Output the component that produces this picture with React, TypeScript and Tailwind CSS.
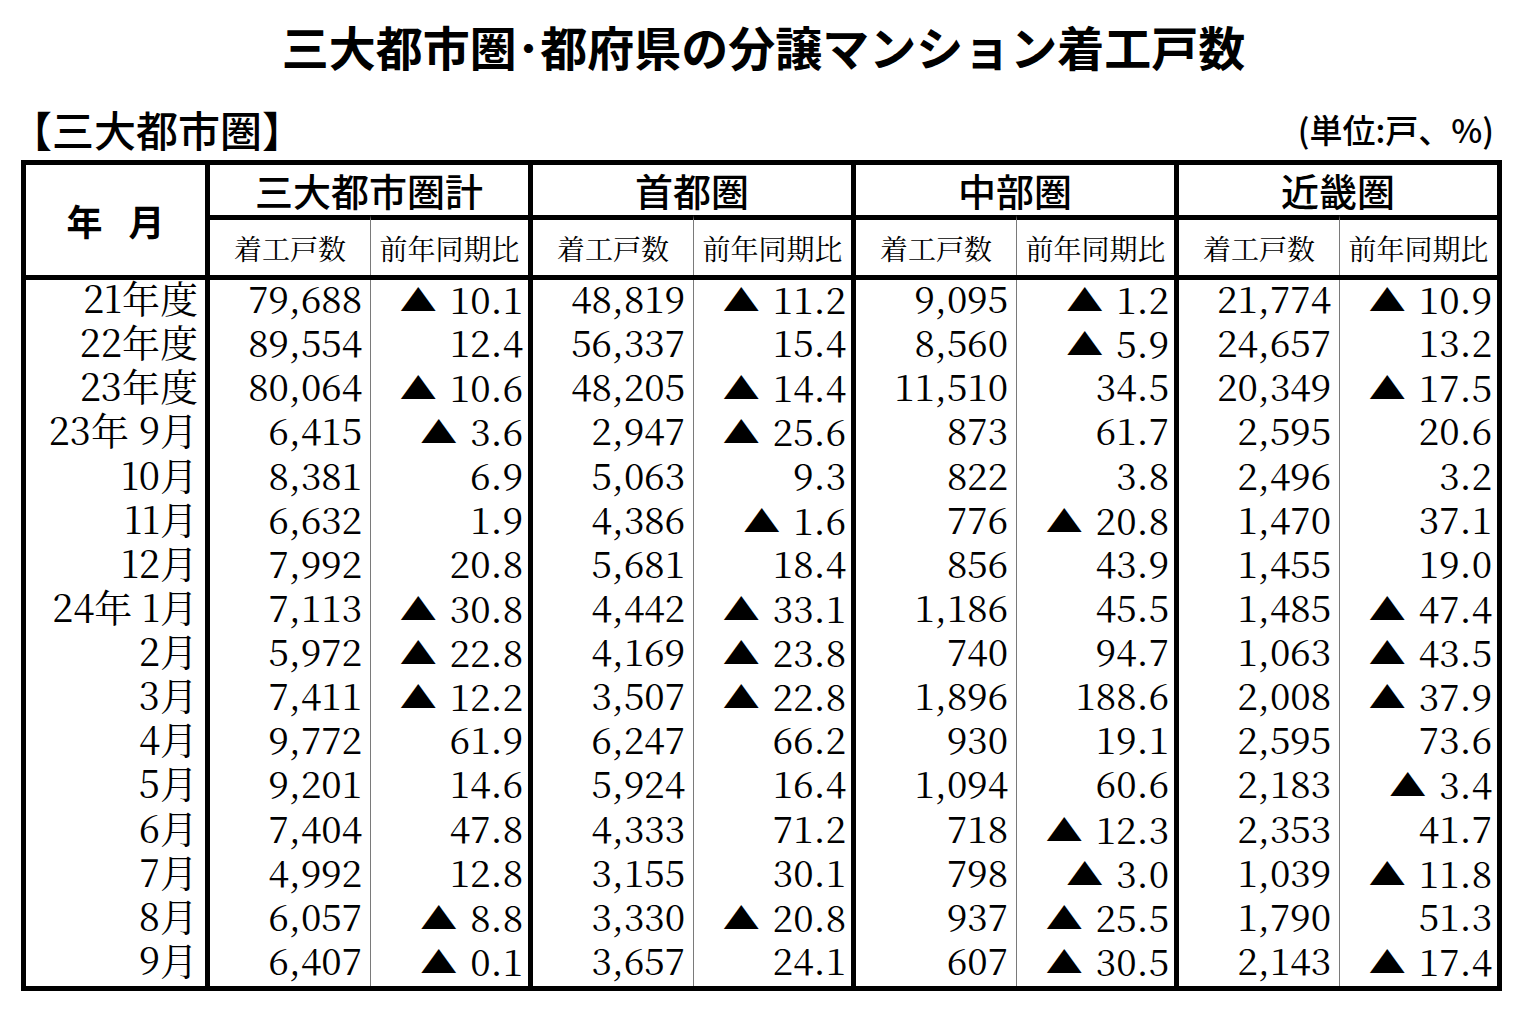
import React from "react";

const rows: string[][] = [
  ["21年度", "79,688", "▲ 10.1", "48,819", "▲ 11.2", "9,095", "▲ 1.2", "21,774", "▲ 10.9"],
  ["22年度", "89,554", "12.4", "56,337", "15.4", "8,560", "▲ 5.9", "24,657", "13.2"],
  ["23年度", "80,064", "▲ 10.6", "48,205", "▲ 14.4", "11,510", "34.5", "20,349", "▲ 17.5"],
  ["23年 9月", "6,415", "▲ 3.6", "2,947", "▲ 25.6", "873", "61.7", "2,595", "20.6"],
  ["10月", "8,381", "6.9", "5,063", "9.3", "822", "3.8", "2,496", "3.2"],
  ["11月", "6,632", "1.9", "4,386", "▲ 1.6", "776", "▲ 20.8", "1,470", "37.1"],
  ["12月", "7,992", "20.8", "5,681", "18.4", "856", "43.9", "1,455", "19.0"],
  ["24年 1月", "7,113", "▲ 30.8", "4,442", "▲ 33.1", "1,186", "45.5", "1,485", "▲ 47.4"],
  ["2月", "5,972", "▲ 22.8", "4,169", "▲ 23.8", "740", "94.7", "1,063", "▲ 43.5"],
  ["3月", "7,411", "▲ 12.2", "3,507", "▲ 22.8", "1,896", "188.6", "2,008", "▲ 37.9"],
  ["4月", "9,772", "61.9", "6,247", "66.2", "930", "19.1", "2,595", "73.6"],
  ["5月", "9,201", "14.6", "5,924", "16.4", "1,094", "60.6", "2,183", "▲ 3.4"],
  ["6月", "7,404", "47.8", "4,333", "71.2", "718", "▲ 12.3", "2,353", "41.7"],
  ["7月", "4,992", "12.8", "3,155", "30.1", "798", "▲ 3.0", "1,039", "▲ 11.8"],
  ["8月", "6,057", "▲ 8.8", "3,330", "▲ 20.8", "937", "▲ 25.5", "1,790", "51.3"],
  ["9月", "6,407", "▲ 0.1", "3,657", "24.1", "607", "▲ 30.5", "2,143", "▲ 17.4"],
];

const groups = ["三大都市圏計", "首都圏", "中部圏", "近畿圏"];

const cols =
  "grid grid-cols-[179px_165px_158px_165px_158px_165px_158px_165px_158px]";

function Value({ v }: { v: string }) {
  if (v.startsWith("▲ ")) {
    return (
      <span className="whitespace-pre">
        <span className="inline-block text-[37px] leading-none mr-[13px] scale-y-[0.8] origin-bottom -translate-y-[4px] font-['Noto_Sans_CJK_JP',sans-serif]">
          ▲
        </span>
        {v.slice(2)}
      </span>
    );
  }
  return <span className="whitespace-pre">{v}</span>;
}

export default function App() {
  return (
    <div className="w-[1527px] h-[1010px] bg-white text-black overflow-hidden font-['Noto_Sans_CJK_JP',sans-serif]">
      <div className="pt-[22px] text-center text-[47px] leading-none font-bold">
        三大都市圏･都府県の分譲マンション着工戸数
      </div>
      <div className="mt-[39px] ml-[10px] mr-[33px] flex items-center justify-between">
        <div className="text-[42px] leading-none font-medium">【三大都市圏】</div>
        <div className="text-[33px] leading-none font-medium">(単位:戸、%)</div>
      </div>
      <div className="mt-[10px] ml-[21px] w-[1481px] border-[5px] border-black">
        <div className={cols}>
          <div className="row-span-2 flex items-center justify-center gap-[26px] text-[36px] leading-none font-bold">
            <span>年</span>
            <span>月</span>
          </div>
          {groups.map((g) => (
            <div
              key={g}
              className="col-span-2 h-[50px] border-l-[5px] border-black flex items-center justify-center text-[38px] leading-none font-medium"
            >
              {g}
            </div>
          ))}
          {groups.map((g) => (
            <React.Fragment key={g + "s"}>
              <div className="h-[60px] border-t-[5px] border-l-[5px] border-black flex items-center justify-center text-[28px] leading-none font-['Noto_Serif_CJK_JP',serif]">
                着工戸数
              </div>
              <div className="h-[60px] border-t-[5px] border-t-black border-l border-l-[#7a7a7a] flex items-center justify-center text-[28px] leading-none font-['Noto_Serif_CJK_JP',serif]">
                前年同期比
              </div>
            </React.Fragment>
          ))}
        </div>
        <div className="border-t-[5px] border-black text-[37px] leading-[34px] font-['Noto_Serif_CJK_JP',serif]">
          {rows.map((r, i) => (
            <div key={i} className={cols}>
              {r.map((c, j) => {
                let cls = "h-[44.125px] text-right ";
                if (j === 0) cls += "pr-[7px] text-[38px]";
                else if (j % 2 === 1) cls += "pr-[8px] border-l-[5px] border-black";
                else cls += "pr-[5px] border-l border-[#7a7a7a]";
                return (
                  <div key={j} className={cls}>
                    <Value v={c} />
                  </div>
                );
              })}
            </div>
          ))}
        </div>
      </div>
    </div>
  );
}
